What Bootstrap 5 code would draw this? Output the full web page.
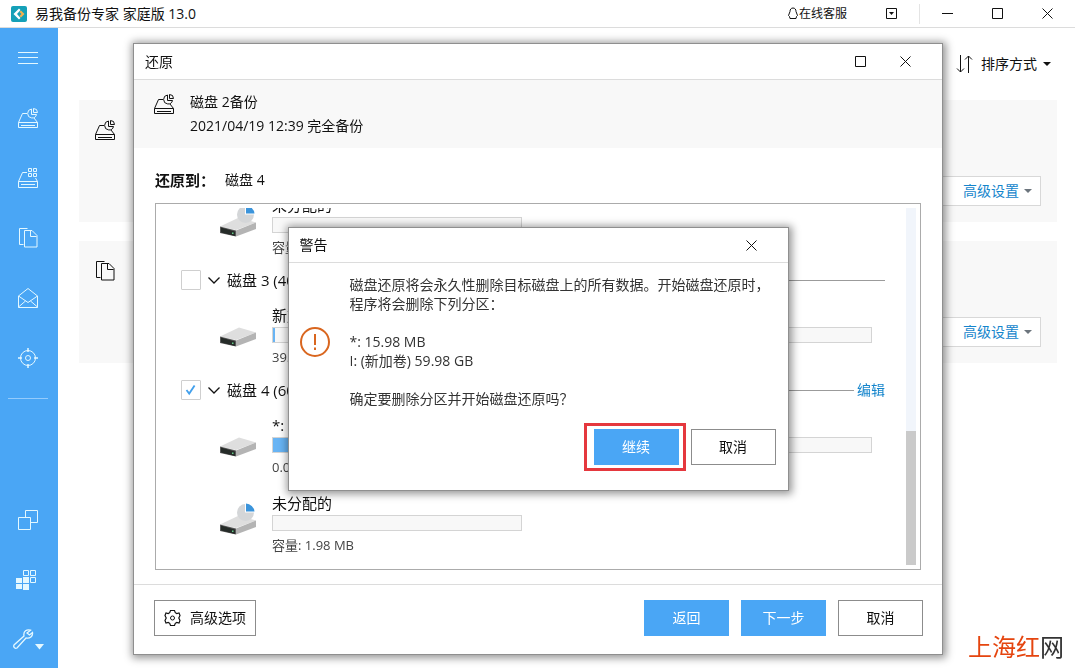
<!DOCTYPE html>
<html lang="zh-CN">
<head>
<meta charset="utf-8">
<meta name="viewport" content="width=device-width, initial-scale=1">
<title>易我备份专家 家庭版 13.0</title>
<link href="https://cdn.jsdelivr.net/npm/bootstrap@5.3.0/dist/css/bootstrap.min.css" rel="stylesheet">
<style>
  :root { --accent: #4aa6f5; --link: #1585cc; --line: #dcdcdc; }
  body { font: 14px/20px "Open Sans", "Noto Sans CJK SC", sans-serif; color: #111; background: #fff; }
  svg { display: block; flex: none; fill: none; stroke: currentColor; }
  a { color: var(--link); text-decoration: none; }

  .titlebar { height: 28px; border-bottom: 1px solid var(--line); padding-left: 11px; padding-right: 22px; }
  .titlebar .support { font-size: 12px; color: #111; margin-right: 39px; }
  .icon-btn { background: none; border: 0; padding: 0; color: #111; display: block; }
  .window-sep { width: 1px; height: 20px; background: #e4e4e4; margin: 0 22px; }
  .window-btns { gap: 39px; }

  .sidebar { width: 58px; background: var(--accent); flex: none; }
  .sidebar a { height: 60px; padding-right: 2px; color: #e4f8ff; display: flex; align-items: center; justify-content: center; }
  .sidebar a.tools { height: 58px; gap: 1px; }
  .sidebar hr { margin: 10px 10px 0 8px; color: #b4dcff; opacity: .7; }

  .sortbar { height: 72px; padding-right: 6px; }
  .sortbar .icon-btn { gap: 6px; }
  .workspace { padding: 0 18px 0 21px; }
  .task { background: #f8f8f8; height: 122px; margin-bottom: 19px; padding: 20px 16px 16px; }
  .btn { --bs-btn-border-radius: 0; font-size: 14px; line-height: 20px; }
  .btn-setting { background: #fff; border: 1px solid #d8d8d8; color: var(--link); width: 124px; height: 30px; padding: 0 8px 0 0; gap: 5px; }
  .caret { width: 0; height: 0; border: 4px solid transparent; border-top-color: currentColor; border-bottom: 0; }

  .win { background: #fff; border: 1px solid #8f8f8f; box-shadow: 1px 1px 8px 2px rgba(0,0,0,.42); }
  .restore { position: fixed; inset: 43px 132px 13px 133px; }
  .win-head { height: 36px; border-bottom: 1px solid var(--line); flex: none; padding: 0 31px 0 11px; }
  .win-tools { gap: 34px; }
  .summary { background: #f8f8f8; padding: 10px 20px; gap: 16px; line-height: 24px; }
  .target { padding: 22px 21px 0; gap: 10px; }
  .target strong { font-size: 15px; }
  .disk-list { flex: 1 1 0; margin: 13px 21px 14px; border: 1px solid #ababab; padding: 4px 4px 4px 0; min-height: 0; }
  .disk-scroll { overflow: hidden; padding: 0 21px 0 25px; min-width: 0; }
  .disk { height: 32px; padding-bottom: 6px; flex: none; font-size: 15px; gap: 7px; }
  .disk .form-check-input { width: 20px; height: 20px; margin: 0; border: 1px solid #cfcfcf; border-radius: 1px; background-color: #fff; }
  .disk .form-check-input:checked { background-image: url("data:image/svg+xml,%3Csvg xmlns='http://www.w3.org/2000/svg' viewBox='0 0 20 20'%3E%3Cpath fill='none' stroke='%2343a0ec' stroke-width='2' d='M5 10l3 4 6-9'/%3E%3C/svg%3E"); background-size: 18px; }
  .disk .rule { height: 1px; background: #9b9b9b; }
  .disk a { font-size: 14px; margin-left: -4px; }
  .parts { padding: 0 13px 0 39px; height: 78px; flex: none; }
  .part { gap: 16px; padding: 6px 0 10px; }
  .part .name { font-size: 15px; }
  .part .progress { width: 250px; height: 16px; border: 1px solid #d4d4d4; border-radius: 0; background: #f8f8f8; margin: 2px 0 4px; }
  .part .progress-bar { background: #68b4f4; }
  .part .size { font-size: 13px; color: #444; }
  .part svg { margin-top: 10px; stroke: none; }
  .track { width: 10px; background: #f1f5fb; flex: none; }
  .thumb { height: 134px; background: #cacaca; }
  .win-foot { border-top: 1px solid var(--line); padding: 15px 19px 18px 20px; gap: 12px; }
  .btn-box { height: 36px; width: 85px; padding: 0; }
  .btn-blue, .btn-blue:hover { background: var(--accent); color: #fff; border: 0; }
  .btn-plain, .btn-plain:hover { background: #fff; color: #111; border: 1px solid #8c8c8c; }
  .btn-option { width: 102px; gap: 9px; }

  .warning { position: absolute; top: 183px; left: 0; right: 0; margin: 0 auto; width: 501px; max-width: 100%; }
  .warning > .win-head { height: 35px; }
  .warning .message { padding: 12px 11px 15px; gap: 20px; line-height: 19px; color: #333; }
  .warning .message svg { color: #d9661f; }
  .warning .actions { gap: 5px; padding: 0 12px 19px; }
  .marked { border: 3px solid #e5383e; padding: 3px 4px 3px 7px; }

  .site-mark { position: fixed; right: 11px; bottom: 6px; font-size: 24px; line-height: 30px; color: #333; }
  .site-mark span { color: #e5450f; }
</style>
</head>
<body class="d-flex flex-column min-vh-100">

<!-- shared drawings -->
<svg class="d-none" aria-hidden="true">
  <symbol id="disk-pie" viewBox="0 0 20 20">
    <path d="M9 5.500H4.500L.5 14.500M16 10l3.500 4.500M.5 14.500h19v5H.5zM3 17.500h14"/>
    <path d="M13.500 1a4.500 4.500 0 1 0 5 5.500h-5z"/><path d="M15.500.5v4h4A4 4 0 0 0 15.500.5z"/>
  </symbol>
  <symbol id="disk-grid" viewBox="0 0 20 20">
    <path d="M9 4.500H4.500L.5 13.500h19L17.500 10M.5 13.500v6h19v-6M3 16.500h14"/>
    <path d="M10.500.5h3v3h-3zM15.500.5h3v3h-3zM10.500 5.500h3v3h-3zM15.500 5.500h3v3h-3z"/>
  </symbol>
  <symbol id="files" viewBox="0 0 20 20">
    <path d="M9.500.5h-8v16h4M6.500 2.500h7.500l5 5v11.500h-12.500zM12.500 3v5.500h6"/>
  </symbol>
  <symbol id="close" viewBox="0 0 11 11"><path d="M.5.5l10 10M10.500.5l-10 10"/></symbol>
  <symbol id="square" viewBox="0 0 11 11"><path d="M.5.5h10v10H.5z"/></symbol>
  <symbol id="drive" viewBox="0 0 36 32">
    <path fill="#dedede" d="M0 21.500L19 12.500 36 17.500 16 25z"/>
    <path fill="#5a5a5a" d="M0 21.500l16 4v6L0 28z"/>
    <path fill="#b4b4b4" d="M16 25.500l20-8V24l-20 7.500z"/>
    <path fill="#252b28" d="M1 22.500l14 4v4.500L1 27.500z"/>
    <path fill="#65c987" d="M12 27.500h1.500V29H12z"/>
  </symbol>
  <symbol id="pie" viewBox="0 0 36 32">
    <circle cx="25.500" cy="9.500" r="8.500" fill="#d4d6d8"/>
    <path fill="#fff" d="M25 0h11v9.500H25z"/><path fill="#3b94db" d="M26 .5a9 9 0 0 1 8.500 8H26z"/>
  </symbol>
</svg>

<header class="titlebar d-flex align-items-center">
  <svg width="16" height="16" viewBox="0 0 16 16"><g stroke="none"><rect width="16" height="16" rx="2" fill="#15a0b8"/><path fill="#fff" d="M8 2.500L2.500 8 8 13.500l1.500-1.500L6 8l3.500-4z"/><path fill="#f6b04c" d="M10 4.500L13.500 8 10 11.500 8.500 10l2-2-2-2z"/></g></svg>
  <span class="ms-2 me-auto">易我备份专家 家庭版 13.0</span>
  <a href="#" class="support d-flex align-items-center">
    <svg width="12" height="13" viewBox="0 0 12 13"><path d="M6 1C4 1 3 2.500 3 4.500L1.500 8.500 2.500 9.500 3 11.500h6l.5-2 1-1L9 4.500C9 2.500 8 1 6 1z"/></svg>在线客服</a>
  <button class="icon-btn" type="button" aria-label="菜单"><svg width="11" height="11" viewBox="0 0 11 11"><path d="M.5.5h10v10H.5z"/><path fill="currentColor" stroke="none" d="M3 4h5L5.500 7z"/></svg></button>
  <div class="window-sep"></div>
  <div class="window-btns d-flex align-items-center">
    <button class="icon-btn" type="button" aria-label="最小化"><svg width="11" height="11"><path d="M0 5.500h11"/></svg></button>
    <button class="icon-btn" type="button" aria-label="最大化"><svg width="11" height="11"><use href="#square"/></svg></button>
    <button class="icon-btn" type="button" aria-label="关闭"><svg width="11" height="11"><use href="#close"/></svg></button>
  </div>
</header>

<div class="d-flex flex-grow-1">
  <nav class="sidebar d-flex flex-column" aria-label="主菜单">
    <a href="#" aria-label="展开"><svg width="20" height="12"><path d="M0 .5h20M0 5.500h20M0 11.500h20"/></svg></a>
    <a href="#" aria-label="磁盘备份"><svg width="20" height="20"><use href="#disk-pie"/></svg></a>
    <a href="#" aria-label="系统备份"><svg width="20" height="20"><use href="#disk-grid"/></svg></a>
    <a href="#" aria-label="文件备份"><svg width="20" height="20"><use href="#files"/></svg></a>
    <a href="#" aria-label="邮件备份"><svg width="20" height="20" viewBox="0 0 20 20"><path d="M.5 8L10 .5 19.500 8v11.500H.5zM.5 8l9.500 6.500L19.500 8M.5 19l7-6M19.500 19l-7-6"/></svg></a>
    <a href="#" aria-label="智能备份"><svg width="20" height="20" viewBox="0 0 20 20"><circle cx="10" cy="10" r="7.500"/><circle cx="10" cy="10" r="2.500"/><path stroke-width="1.500" d="M10 0v4M10 16v4M0 10h4M16 10h4"/></svg></a>
    <hr>
    <div class="mt-auto">
      <a href="#" aria-label="克隆"><svg width="20" height="20" viewBox="0 0 20 20"><path d="M.5 7.500h12v12H.5zM7.500 7.500v-7h12v12h-7"/></svg></a>
      <a href="#" aria-label="系统迁移"><svg class="me-1" width="20" height="20" viewBox="0 0 20 20"><path d="M7.500.5h5v5h-5zM14.500.5h5v5h-5zM14.500 7.500h5v5h-5z"/><path fill="currentColor" stroke="none" d="M0 8h6v5H0zM7 7h6v6H7zM0 14h6v5H0zM7 14h6v6H7z"/></svg></a>
      <a href="#" class="tools" aria-label="工具"><svg width="21" height="20" viewBox="0 0 21 20"><path stroke-width="1.300" d="M17.500 1.200C14 0 10 2 11 7L1 16c-1 2 1 4 3 3l9-10c4 1 7-2 6.500-5.500L16.500 6 14 4z"/></svg><svg width="9" height="6" class="mt-3"><path fill="currentColor" stroke="none" d="M0 0h9L4.500 5.500z"/></svg></a>
    </div>
  </nav>

  <main class="workspace flex-grow-1">
    <div class="sortbar d-flex align-items-center justify-content-end">
      <button class="icon-btn d-flex align-items-center" type="button">
        <svg width="19" height="18" viewBox="0 0 19 18"><path d="M4.500 0v17M1 13.500L4.500 17 8 13.500M12.500 18V1M9 4.500L12.500 1 16 4.500"/></svg><span>排序方式</span><span class="caret"></span></button>
    </div>
    <section class="task d-flex justify-content-between">
      <svg width="20" height="20"><use href="#disk-pie"/></svg>
      <button class="btn btn-setting align-self-end d-flex align-items-center justify-content-end" type="button">高级设置<span class="caret text-secondary"></span></button>
    </section>
    <section class="task d-flex justify-content-between">
      <svg width="20" height="20"><use href="#files"/></svg>
      <button class="btn btn-setting align-self-end d-flex align-items-center justify-content-end" type="button">高级设置<span class="caret text-secondary"></span></button>
    </section>
  </main>
</div>

<div class="site-mark"><span>上海红</span>网</div>

<div class="restore win d-flex flex-column" role="dialog" aria-label="还原">
  <div class="win-head d-flex align-items-center">
    <span class="me-auto">还原</span>
    <div class="win-tools d-flex">
      <button class="icon-btn" type="button" aria-label="最大化"><svg width="11" height="11"><use href="#square"/></svg></button>
      <button class="icon-btn" type="button" aria-label="关闭"><svg width="11" height="11"><use href="#close"/></svg></button>
    </div>
  </div>
  <div class="summary d-flex">
    <svg width="20" height="20" class="mt-1"><use href="#disk-pie"/></svg>
    <div><div>磁盘 2备份</div><div>2021/04/19 12:39 完全备份</div></div>
  </div>
  <div class="target d-flex align-items-center"><strong>还原到：</strong><span>磁盘 4</span></div>

  <div class="disk-list d-flex">
    <div class="disk-scroll d-flex flex-column justify-content-end flex-grow-1">
      <div class="parts d-flex justify-content-between">
        <div class="part d-flex"><svg width="36" height="32"><use href="#drive"/><use href="#pie"/></svg>
          <div><div class="name">未分配的</div><div class="progress"></div><div class="size">容量: 1.98 MB</div></div></div>
      </div>

      <div class="disk d-flex align-items-center">
        <input class="form-check-input" type="checkbox" id="disk3">
        <svg width="12" height="7"><path stroke-width="1.300" d="M.5.5L6 6 11.500.5"/></svg>
        <label for="disk3">磁盘 3 (40.00 GB)</label><span class="rule flex-grow-1"></span>
      </div>
      <div class="parts d-flex justify-content-between">
        <div class="part d-flex"><svg width="36" height="32"><use href="#drive"/></svg>
          <div><div class="name">新加卷</div><div class="progress"><div class="progress-bar" style="width:1%"></div></div><div class="size">39.90 GB</div></div></div>
        <div class="part d-flex"><div><div class="name">&nbsp;</div><div class="progress"></div></div></div>
      </div>

      <div class="disk d-flex align-items-center">
        <input class="form-check-input" type="checkbox" id="disk4" checked>
        <svg width="12" height="7"><path stroke-width="1.300" d="M.5.5L6 6 11.500.5"/></svg>
        <label for="disk4">磁盘 4 (60.00 GB)</label><span class="rule flex-grow-1"></span><a href="#">编辑</a>
      </div>
      <div class="parts d-flex justify-content-between">
        <div class="part d-flex"><svg width="36" height="32"><use href="#drive"/></svg>
          <div><div class="name">*: (其他)</div><div class="progress"><div class="progress-bar" style="width:100%"></div></div><div class="size">0.00 MB</div></div></div>
        <div class="part d-flex"><div><div class="name">&nbsp;</div><div class="progress"></div></div></div>
      </div>
      <div class="parts d-flex justify-content-between">
        <div class="part d-flex"><svg width="36" height="32"><use href="#drive"/><use href="#pie"/></svg>
          <div><div class="name">未分配的</div><div class="progress"></div><div class="size">容量: 1.98 MB</div></div></div>
      </div>
    </div>
    <div class="track d-flex flex-column justify-content-end"><div class="thumb"></div></div>
  </div>

  <div class="win-foot d-flex">
    <button class="btn btn-plain btn-box btn-option d-flex align-items-center justify-content-center me-auto" type="button">
      <svg width="17" height="18" viewBox="0 0 17 18"><path stroke-width="1.200" d="M6.500 1.500h4l.8 2.200 1.500.8 2.200-.6 1 2.600L14.800 9l1.200 2.500-1 2.600-2.200-.6-1.500.8-.8 2.200h-4l-.8-2.200-1.500-.8-2.200.6-1-2.600L2.200 9 1 6.500l1-2.600 2.200.6 1.500-.8z"/><circle cx="8.500" cy="9" r="2"/></svg>高级选项</button>
    <button class="btn btn-blue btn-box" type="button">返回</button>
    <button class="btn btn-blue btn-box" type="button">下一步</button>
    <button class="btn btn-plain btn-box" type="button">取消</button>
  </div>

  <div class="warning win" role="alertdialog" aria-label="警告">
    <div class="win-head d-flex align-items-center">
      <span class="me-auto">警告</span>
      <button class="icon-btn" type="button" aria-label="关闭"><svg width="11" height="11"><use href="#close"/></svg></button>
    </div>
    <div class="message d-flex align-items-center">
      <svg width="30" height="30" viewBox="0 0 30 30"><circle cx="15" cy="15" r="14" stroke-width="2"/><path stroke-width="2" d="M15 7v11M15 20.500v2.500"/></svg>
      <div>磁盘还原将会永久性删除目标磁盘上的所有数据。开始磁盘还原时，<br>程序将会删除下列分区：<br><br>*: 15.98 MB<br>I: (新加卷) 59.98 GB<br><br>确定要删除分区并开始磁盘还原吗？</div>
    </div>
    <div class="actions d-flex align-items-center justify-content-end">
      <div class="marked"><button class="btn btn-blue btn-box d-block" type="button">继续</button></div>
      <button class="btn btn-plain btn-box" type="button">取消</button>
    </div>
  </div>
</div>

<script src="https://cdn.jsdelivr.net/npm/bootstrap@5.3.0/dist/js/bootstrap.bundle.min.js"></script>
</body>
</html>
